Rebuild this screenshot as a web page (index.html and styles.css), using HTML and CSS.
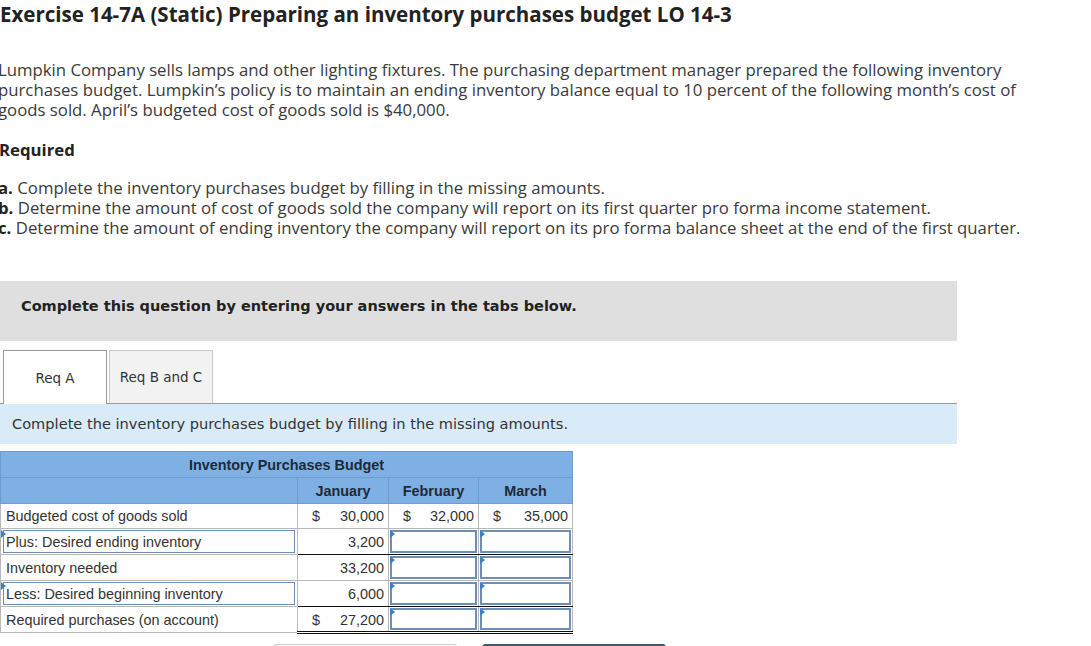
FILE: index.html
```html
<!DOCTYPE html>
<html lang="en">
<head>
<meta charset="utf-8">
<title>Exercise 14-7A</title>
<link rel="stylesheet" href="styles.css">
</head>
<body>
<div class="page">
  <h1 class="title">Exercise 14-7A (Static) Preparing an inventory purchases budget LO 14-3</h1>
  <p class="intro">Lumpkin Company sells lamps and other lighting fixtures. The purchasing department manager prepared the following inventory<br>purchases budget. Lumpkin’s policy is to maintain an ending inventory balance equal to 10 percent of the following month’s cost of<br>goods sold. April’s budgeted cost of goods sold is $40,000.</p>
  <h2 class="req">Required</h2>
  <ul class="tasks">
    <li><b>a.</b> Complete the inventory purchases budget by filling in the missing amounts.</li>
    <li><b>b.</b> Determine the amount of cost of goods sold the company will report on its first quarter pro forma income statement.</li>
    <li><b>c.</b> Determine the amount of ending inventory the company will report on its pro forma balance sheet at the end of the first quarter.</li>
  </ul>

  <div class="instructions">Complete this question by entering your answers in the tabs below.</div>

  <div class="tabs">
    <div class="tab active">Req A</div>
    <div class="tab">Req B and C</div>
  </div>
  <div class="prompt">Complete the inventory purchases budget by filling in the missing amounts.</div>

  <table class="budget">
    <colgroup>
      <col class="c-label"><col class="c-jan"><col class="c-feb"><col class="c-mar">
    </colgroup>
    <thead>
      <tr><th colspan="4" class="caption">Inventory Purchases Budget</th></tr>
      <tr><th class="blank"></th><th>January</th><th>February</th><th>March</th></tr>
    </thead>
    <tbody>
      <tr>
        <td class="label">Budgeted cost of goods sold</td>
        <td class="num"><span class="cur">$</span>30,000</td>
        <td class="num"><span class="cur">$</span>32,000</td>
        <td class="num"><span class="cur">$</span>35,000</td>
      </tr>
      <tr class="sub">
        <td class="label"><div class="select"><span class="flag"></span>Plus: Desired ending inventory</div></td>
        <td class="num">3,200</td>
        <td class="in"><div class="box"><span class="flag"></span></div></td>
        <td class="in"><div class="box"><span class="flag"></span></div></td>
      </tr>
      <tr>
        <td class="label">Inventory needed</td>
        <td class="num">33,200</td>
        <td class="in"><div class="box"><span class="flag"></span></div></td>
        <td class="in"><div class="box"><span class="flag"></span></div></td>
      </tr>
      <tr class="sub">
        <td class="label"><div class="select"><span class="flag"></span>Less: Desired beginning inventory</div></td>
        <td class="num">6,000</td>
        <td class="in"><div class="box"><span class="flag"></span></div></td>
        <td class="in"><div class="box"><span class="flag"></span></div></td>
      </tr>
      <tr class="total">
        <td class="label">Required purchases (on account)</td>
        <td class="num"><span class="cur">$</span>27,200</td>
        <td class="in"><div class="box"><span class="flag"></span></div></td>
        <td class="in"><div class="box"><span class="flag"></span></div></td>
      </tr>
    </tbody>
  </table>

  <div class="nav">
    <button class="btn btn-prev" aria-label="Previous"></button>
    <button class="btn btn-next" aria-label="Next"></button>
  </div>
</div>
</body>
</html>
```

FILE: styles.css
```css
* { box-sizing: border-box; }
html, body { margin: 0; padding: 0; background: #fff; }
body { overflow: hidden; }

.page {
  width: 1091px;
  font-family: "Open Sans", "Liberation Sans", sans-serif;
  color: #3a3a3a;
}

.title {
  margin: 0;
  font-size: 20.5px;
  line-height: 28px;
  font-weight: 700;
  color: #222;
}

.intro {
  margin: 32px 0 0 -2px;
  font-size: 16.75px;
  line-height: 20px;
}

.req {
  margin: 20px 0 0 -1px;
  font-size: 16.75px;
  line-height: 20px;
  font-weight: 700;
  color: #222;
}

.tasks {
  list-style: none;
  margin: 18px 0 0 -2px;
  padding: 0;
  font-size: 16.75px;
  line-height: 20px;
}
.tasks li { height: 20px; }
.tasks b {
  display: inline-block;
  height: 20px;
  line-height: 20px;
  color: #222;
}

.instructions {
  width: 957px;
  margin-top: 43px;
  height: 60px;
  padding: 15px 21px 0;
  background: #dfdfdf;
  font-family: "DejaVu Sans", Verdana, sans-serif;
  font-weight: 700;
  font-size: 14.5px;
  line-height: 20px;
  color: #222;
}

.tabs {
  display: flex;
  gap: 2px;
  width: 957px;
  margin-top: 9px;
  padding-left: 3px;
  border-bottom: 1px solid #9a9a9a;
}
.tab {
  width: 104px;
  height: 53px;
  display: flex;
  align-items: center;
  justify-content: center;
  font-family: "DejaVu Sans", Verdana, sans-serif;
  font-size: 13.5px;
  color: #333;
  background: #f2f2f2;
  border: 1px solid #c8c8c8;
  border-bottom: none;
}
.tab.active {
  background: #fff;
  border-color: #9a9a9a;
  margin-bottom: -1px;
  height: 54px;
}

.prompt {
  width: 957px;
  height: 40px;
  padding: 10px 12px 0;
  background: #d9eaf8;
  font-family: "DejaVu Sans", Verdana, sans-serif;
  font-size: 14.6px;
  line-height: 20px;
  color: #333;
}

.budget {
  margin-top: 7px;
  border-collapse: collapse;
  table-layout: fixed;
  width: 572px;
  font-family: "Liberation Sans", Arial, sans-serif;
  font-size: 14.4px;
  color: #333;
}
.c-label { width: 297px; }
.c-jan { width: 91px; }
.c-feb { width: 90px; }
.c-mar { width: 94px; }

.budget th {
  background: #7eb0e4;
  color: #1e2a36;
  font-weight: 700;
  height: 26px;
  padding: 0;
  border: 1px solid #6f9ccc;
  text-align: center;
}

.budget td {
  height: 26px;
  padding: 0;
  border: 1px solid #b9b9b9;
  position: relative;
}
.budget tbody tr:first-child td { height: 25px; }
.budget td.label { padding-left: 5px; }
.budget td.num {
  text-align: right;
  padding-right: 4px;
}
.cur { float: left; padding-left: 14px; }

.sub td.num, .sub td.in { border-bottom: 1px solid #111; }
.total td { padding-top: 1px; }
.total td.num, .total td.in { border-bottom: 3px double #111; }

.select {
  position: absolute;
  left: 2px; right: 2px; top: 1px; bottom: 1px;
  border: 1px solid #6d8fb6;
  padding-left: 2px;
  line-height: 22px;
}
.budget tr.sub td.label { padding-left: 0; }

.box {
  position: absolute;
  left: 1px; right: 1px; top: 1px; bottom: 1px;
  border: 2px solid #6d8fb6;
  background: #fff;
}
.flag {
  position: absolute;
  left: -2px;
  top: -2px;
  width: 0; height: 0;
  border-left: 5px solid #3f7fc4;
  border-top: 4px solid transparent;
  border-bottom: 4px solid transparent;
}
.select .flag { left: -3px; top: -1px; }

.nav {
  display: flex;
  gap: 25px;
  margin-top: 10px;
  padding-left: 273px;
}
.btn {
  width: 184px;
  height: 40px;
  border-radius: 3px;
}
.btn-prev { background: #f4f4f4; border: 1px solid #cfcfcf; }
.btn-next { background: #3e5b6b; border: 1px solid #3e5b6b; }
```
